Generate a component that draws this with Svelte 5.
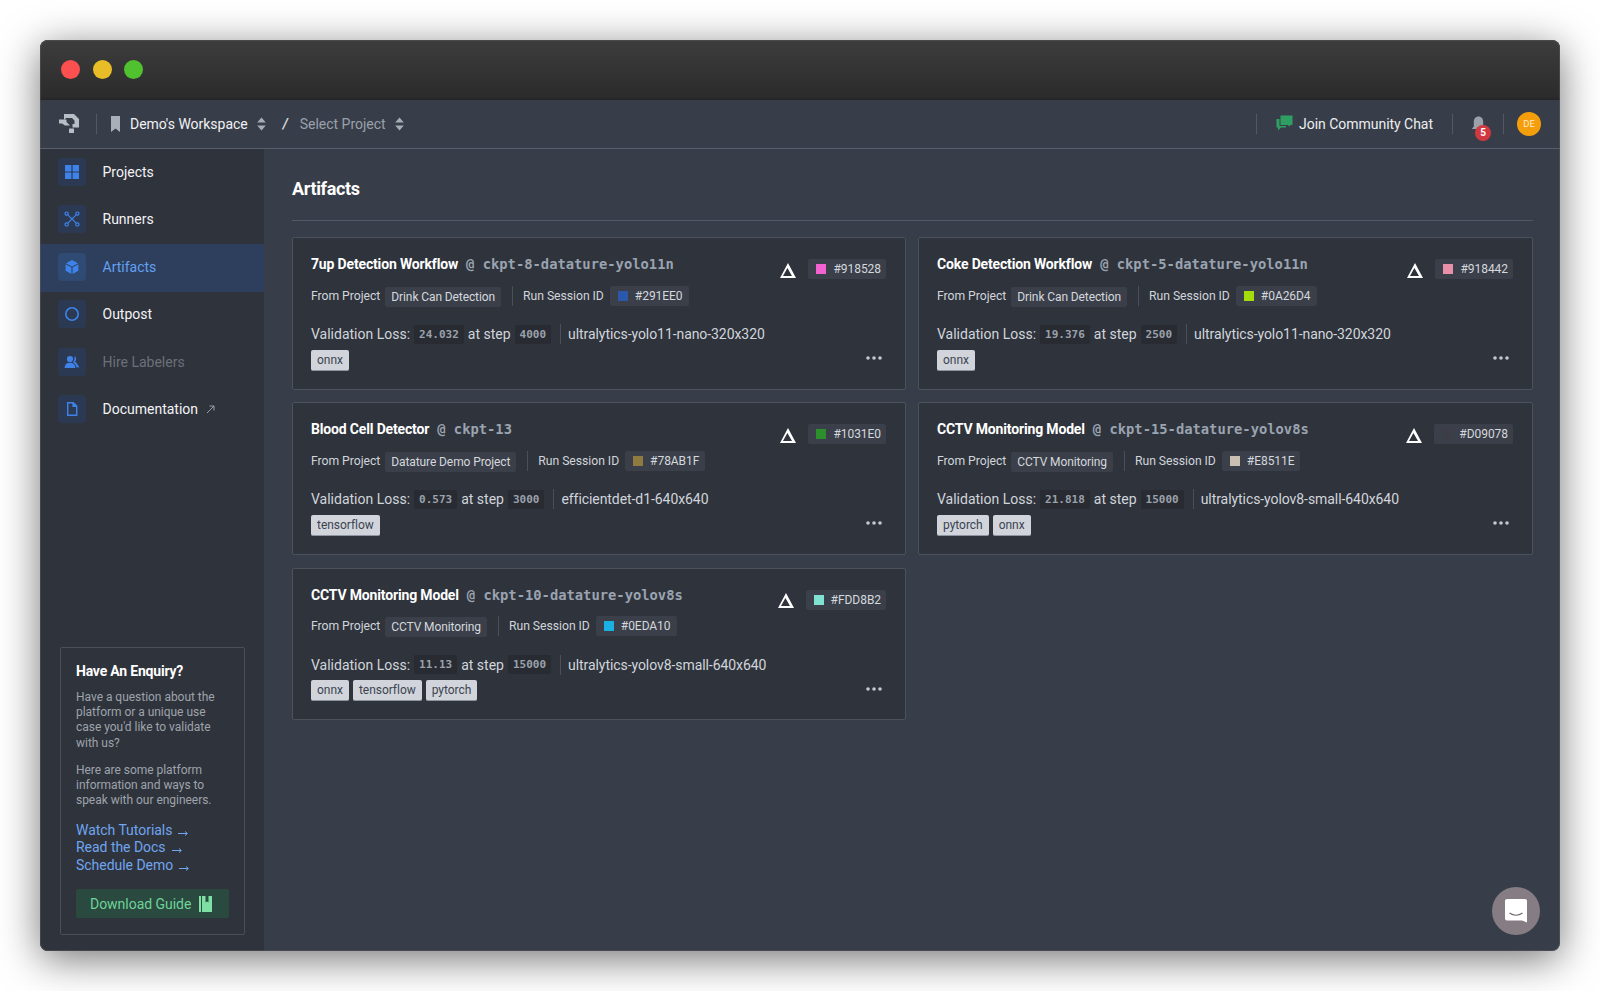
<script>
  const nav = [
    { label: 'Projects', icon: 'grid' },
    { label: 'Runners', icon: 'nodes' },
    { label: 'Artifacts', icon: 'cube', active: true },
    { label: 'Outpost', icon: 'ring' },
    { label: 'Hire Labelers', icon: 'people', muted: true },
    { label: 'Documentation', icon: 'doc', ext: true }
  ];
  const cards = [
    { title: '7up Detection Workflow', ck: 'ckpt-8-datature-yolo11n', hash: '#918528', sw: '#f462d2', project: 'Drink Can Detection', run: '#291EE0', runSw: '#2a58ab', loss: '24.032', step: '4000', model: 'ultralytics-yolo11-nano-320x320', tags: ['onnx'] },
    { title: 'Coke Detection Workflow', ck: 'ckpt-5-datature-yolo11n', hash: '#918442', sw: '#e98fa8', project: 'Drink Can Detection', run: '#0A26D4', runSw: '#a3dc0a', loss: '19.376', step: '2500', model: 'ultralytics-yolo11-nano-320x320', tags: ['onnx'] },
    { title: 'Blood Cell Detector', ck: 'ckpt-13', hash: '#1031E0', sw: '#2c8f2c', project: 'Datature Demo Project', run: '#78AB1F', runSw: '#8f7a40', loss: '0.573', step: '3000', model: 'efficientdet-d1-640x640', tags: ['tensorflow'] },
    { title: 'CCTV Monitoring Model', ck: 'ckpt-15-datature-yolov8s', hash: '#D09078', sw: '#3d3d47', project: 'CCTV Monitoring', run: '#E8511E', runSw: '#c9bfb2', loss: '21.818', step: '15000', model: 'ultralytics-yolov8-small-640x640', tags: ['pytorch', 'onnx'] },
    { title: 'CCTV Monitoring Model', ck: 'ckpt-10-datature-yolov8s', hash: '#FDD8B2', sw: '#80e0d2', project: 'CCTV Monitoring', run: '#0EDA10', runSw: '#1bb0e2', loss: '11.13', step: '15000', model: 'ultralytics-yolov8-small-640x640', tags: ['onnx', 'tensorflow', 'pytorch'] }
  ];
  const links = ['Watch Tutorials', 'Read the Docs', 'Schedule Demo'];
</script>

{#snippet updown()}
  <svg class="updown" width="9" height="14" viewBox="0 0 9 14"><path d="M4.5 0.5 L8.8 5.5 H0.2 Z M4.5 13.5 L0.2 8.5 H8.8 Z" fill="currentColor"/></svg>
{/snippet}

{#snippet navIcon(kind)}
  <svg width="16" height="16" viewBox="0 0 16 16" fill="#3f83ea" stroke="none">
    {#if kind === 'grid'}
      <rect x="1" y="1" width="6.4" height="6.4" rx=".5"/><rect x="8.6" y="1" width="6.4" height="6.4" rx=".5"/><rect x="1" y="8.6" width="6.4" height="6.4" rx=".5"/><rect x="8.6" y="8.6" width="6.4" height="6.4" rx=".5"/>
    {:else if kind === 'nodes'}
      <g fill="none" stroke="#3f83ea" stroke-width="1.2"><circle cx="2.6" cy="2.6" r="1.6"/><circle cx="13.4" cy="2.6" r="1.6"/><circle cx="2.6" cy="13.4" r="1.6"/><circle cx="13.4" cy="13.4" r="1.6"/><path d="M3.8 3.8 L12.2 12.2 M12.2 3.8 L3.8 12.2"/></g>
    {:else if kind === 'cube'}
      <path d="M8 1 L14 4.2 L8 7.4 L2 4.2 Z"/><path d="M1.6 5.2 L7.4 8.4 V15 L1.6 11.8 Z"/><path d="M14.4 5.2 L8.6 8.4 V15 L14.4 11.8 Z"/>
    {:else if kind === 'ring'}
      <circle cx="8" cy="8" r="6.2" fill="none" stroke="#3f83ea" stroke-width="1.6"/>
    {:else if kind === 'people'}
      <circle cx="6" cy="5" r="3.1"/><path d="M0.6 14 C1 10 3 8.8 6 8.8 C9 8.8 11 10 11.4 14 Z"/><path d="M10.4 2.3 C12.4 2.6 13 6.6 10.6 7.8 C12.6 8.4 13 9.8 15.4 13.4 L12.4 13.2 C12 11 11 9.4 9 8.2 C10.6 6.6 10.8 4 10.4 2.3 Z"/>
    {:else}
      <path d="M3 1 H9.6 L13.4 4.8 V15 H3 Z M4.4 2.4 V13.6 H12 V6 H8.4 V2.4 Z" fill-rule="evenodd"/>
    {/if}
  </svg>
{/snippet}

<div class="window">
  <div class="titlebar">
    <span class="dot red"></span><span class="dot yellow"></span><span class="dot green"></span>
  </div>
  <header class="topbar">
    <svg class="logo" width="20" height="19" viewBox="0 0 20 19" fill="#b9bec6">
      <path d="M5 0 H15 L20 5 V13.5 H13.5 V10 H15.5 V6.5 L13 4 H7 L5.5 5.5 H5 Z"/><path d="M0 5.5 H7.5 V8 L11 11.5 H6 L3 9.5 H0 Z"/><rect x="10" y="14.5" width="5" height="4.5" rx=".5"/>
    </svg>
    <span class="vr first"></span>
    <svg class="bookmark" width="9" height="16" viewBox="0 0 9 16"><path d="M0 0 H9 V16 L4.5 12.5 L0 16 Z" fill="#a9afb8"/></svg>
    <span class="crumb">Demo's Workspace</span>
    {@render updown()}
    <span class="slash">/</span>
    <span class="crumb dim">Select Project</span>
    {@render updown()}
    <span class="spacer"></span>
    <span class="vr"></span>
    <svg class="chat" width="17" height="17" viewBox="0 0 17 17" fill="#2f9e63"><path d="M4.5 0.5 H16.5 V10 H14 V11.5 L11.5 10 H4.5 Z"/><path d="M0.5 4 H3.5 V11 H10 V12.5 H5 L2 15.5 V12.5 H0.5 Z"/></svg>
    <span class="join">Join Community Chat</span>
    <span class="vr"></span>
    <span class="bell">
      <svg width="15" height="16" viewBox="0 0 15 16" fill="#9aa1ab"><path d="M7.5 0.5 C10.5 0.5 12.2 2.8 12.2 6 V10.5 L14.2 13 H0.8 L2.8 10.5 V6 C2.8 2.8 4.5 0.5 7.5 0.5 Z"/><path d="M5.5 14 H9.5 C9.5 15 8.6 15.7 7.5 15.7 C6.4 15.7 5.5 15 5.5 14 Z"/></svg>
      <span class="badge">5</span>
    </span>
    <span class="vr"></span>
    <span class="avatar">DE</span>
  </header>
  <div class="body">
    <aside class="sidebar">
      <nav>
        {#each nav as item}
          <div class="nav-row" class:active={item.active} class:muted={item.muted}>
            <span class="nav-icon">{@render navIcon(item.icon)}</span>
            <span class="nav-label">{item.label}</span>
            {#if item.ext}
              <svg class="ext" width="9" height="9" viewBox="0 0 9 9" fill="none" stroke="#9aa1ab" stroke-width="1"><path d="M1 8 L8 1 M3.5 1 H8 V5.5"/></svg>
            {/if}
          </div>
        {/each}
      </nav>
      <div class="enquiry">
        <h3>Have An Enquiry?</h3>
        <p>Have a question about the platform or a unique use case you'd like to validate with us?</p>
        <p>Here are some platform information and ways to speak with our engineers.</p>
        <div class="links">
          {#each links as link}
            <div class="link">{link}<svg class="arrow" width="10" height="6" viewBox="0 0 10 6" fill="none" stroke="#70a5f0" stroke-width="1"><path d="M0 3.5 H9 M7 1.5 L9.4 3.5 L7 5.5"/></svg></div>
          {/each}
        </div>
        <div class="download">
          Download Guide
          <svg width="13" height="16" viewBox="0 0 13 16" fill="#7fe0a6"><path d="M0 0 H2 V16 H0 Z M3 0 H6.5 V6.5 L8 5.5 L9.5 6.5 V0 H13 V16 H3 Z"/></svg>
        </div>
      </div>
    </aside>
    <main class="main">
      <h1>Artifacts</h1>
      <div class="grid">
        {#each cards as c}
          <article class="card">
            <div class="top">
              <div class="title"><strong>{c.title}</strong><span class="ck"><span class="at">@</span> {c.ck}</span></div>
              <div class="top-right">
                <svg class="delta" width="16" height="15" viewBox="0 0 16 15"><path fill-rule="evenodd" d="M8 0 L16 15 H0 Z M7.4 5 L3 13 H12 Z" fill="#fff"/></svg>
                <span class="pill hash"><i style="background:{c.sw}"></i>{c.hash}</span>
              </div>
            </div>
            <div class="meta">
              <span>From Project</span>
              <span class="pill proj">{c.project}</span>
              <span class="sep"></span>
              <span>Run Session ID</span>
              <span class="pill hash run"><i style="background:{c.runSw}"></i>{c.run}</span>
            </div>
            <div class="val">
              <span>Validation Loss:</span>
              <code>{c.loss}</code>
              <span>at step</span>
              <code>{c.step}</code>
              <span class="sep"></span>
              <span class="model">{c.model}</span>
            </div>
            <div class="bottom">
              <div class="tags">{#each c.tags as t}<span class="tag">{t}</span>{/each}</div>
              <svg class="more" width="16" height="4" viewBox="0 0 16 4" fill="#c5c9d0"><circle cx="2" cy="2" r="1.8"/><circle cx="8" cy="2" r="1.8"/><circle cx="14" cy="2" r="1.8"/></svg>
            </div>
          </article>
        {/each}
      </div>
    </main>
  </div>
  <div class="bubble">
    <svg width="24" height="26" viewBox="0 0 24 26"><path d="M3 1 H21 Q23 1 23 3 V24.5 L18 22.5 H3 Q1 22.5 1 20.5 V3 Q1 1 3 1 Z" fill="#fff"/><path d="M5.5 15 Q12 19.5 18.5 15" fill="none" stroke="#6e686c" stroke-width="1.2"/></svg>
  </div>
</div>

<style>
  :global(body) { margin: 0; background: #fff; font-family: Roboto, "Liberation Sans", sans-serif; }
  .window {
    position: relative; width: 1520px; height: 911px; margin: 40px; border-radius: 8px; overflow: hidden;
    background: #383e49; display: flex; flex-direction: column; color: #e5e7eb;
    box-shadow: 0 8px 40px rgba(0,0,0,.55); outline: 1px solid rgba(90,90,90,.5); outline-offset: -1px;
  }
  .titlebar { height: 60px; flex: none; box-sizing: border-box; display: flex; align-items: center; gap: 12.5px; padding: 1px 0 0 21px;
    background: linear-gradient(#3d3d3d, #2b2b2b); border-bottom: 2px solid #24262a; }
  .dot { width: 19px; height: 19px; border-radius: 50%; }
  .red { background: #fb5050; } .yellow { background: #e8bd28; } .green { background: #51c22f; }
  .topbar { height: 49px; flex: none; box-sizing: border-box; border-bottom: 1px solid #58606e; display: flex; align-items: center; padding: 0 19px 1px 19px; font-size: 14px; }
  .logo { margin-right: 17px; }
  .vr { width: 1px; height: 20px; background: #525966; flex: none; }
  .vr.first { margin-right: 14px; }
  .bookmark { margin-right: 10px; }
  .crumb { color: #f0f1f3; letter-spacing: -.02px; }
  .crumb.dim { color: #9aa1ab; }
  .updown { color: #a6acb5; margin-left: 9px; }
  .slash { margin: 0 12px 0 17px; color: #d5d8dc; font-style: italic; font-weight: 700; }
  .spacer { flex: 1; }
  .chat { margin: 0 6px 0 19px; }
  .join { color: #eceef0; margin-right: 19px; letter-spacing: -.03px; }
  .bell { position: relative; width: 15px; height: 16px; margin: 0 17px 0 18px; }
  .bell svg { display: block; }
  .badge { position: absolute; left: 4px; top: 9px; width: 16px; height: 16px; border-radius: 50%; background: #d2383f; color: #fff; font-size: 10px; font-weight: 700; display: flex; align-items: center; justify-content: center; }
  .avatar { width: 24px; height: 24px; margin-left: 13px; border-radius: 50%; background: #f59e0b; color: #fde9c4; font-size: 9.5px; display: flex; align-items: center; justify-content: center; }
  .body { flex: 1; display: flex; min-height: 0; }
  .sidebar { width: 224px; flex: none; background: #2f333c; display: flex; flex-direction: column; justify-content: space-between; padding-bottom: 16px; box-sizing: border-box; }
  .nav-row { height: 47.5px; box-sizing: border-box; display: flex; align-items: center; padding: 0 0 2px 18px; font-size: 14px; color: #f3f4f6; }
  .nav-row.active { background: #2d3f5c; color: #63a0f2; }
  .nav-row.muted { color: #6b7079; }
  .nav-icon { width: 28px; height: 28px; border-radius: 4px; background: #2b3a52; display: flex; align-items: center; justify-content: center; margin-right: 16.5px; }
  .nav-row.active .nav-icon { background: #2f4a73; }
  .ext { margin-left: 8px; }
  .enquiry { margin: 0 19px 0 20px; height: 288px; box-sizing: border-box; padding: 14px 15px; border: 1px solid #4a4f59; border-radius: 2px; }
  .enquiry h3 { margin: 0 0 9.5px; font-size: 14px; line-height: 18px; font-weight: 700; color: #fff; letter-spacing: -.2px; }
  .enquiry p { margin: 0 0 11.5px; font-size: 12px; line-height: 15.4px; color: #9ea3ab; letter-spacing: -.03px; }
  .links { margin-top: 13px; }
  .link { font-size: 14px; height: 17.4px; line-height: 17.4px; color: #70a5f0; letter-spacing: -.03px; }
  .arrow { margin-left: 6px; vertical-align: -1px; }
  .download { margin-top: 15px; height: 29px; display: flex; align-items: center; padding-left: 14px; gap: 8px; background: #2a4a3f; border-radius: 2px; color: #6ed39a; font-size: 14px; letter-spacing: -.03px; }
  .main { flex: 1; padding: 0 27px 0 28px; min-width: 0; }
  h1 { margin: 0; height: 72px; line-height: 79px; box-sizing: border-box; border-bottom: 1px solid #525966; font-size: 18px; font-weight: 700; color: #fff; letter-spacing: -.35px; }
  .grid { margin-top: 16px; display: grid; grid-template-columns: 614px 1fr; gap: 12.7px 12px; grid-auto-rows: 152.6px; }
  .card { box-sizing: border-box; background: #2f333c; border: 1px solid #4c515b; border-radius: 2px; padding: 16px 19px 0 18px; display: flex; flex-direction: column; }
  .top { display: flex; justify-content: space-between; align-items: flex-start; height: 31.5px; }
  .title { display: flex; align-items: baseline; height: 20px; line-height: 20px; }
  .title strong { font-size: 14px; font-weight: 700; color: #fff; letter-spacing: -.16px; }
  .ck { margin-left: 8px; font-family: "DejaVu Sans Mono", monospace; font-size: 13.8px; font-weight: 700; color: #9aa3b0; white-space: pre; }
  .top-right { display: flex; align-items: center; gap: 12px; margin-top: 5px; }
  .delta { margin-top: 2px; }
  .pill { background: #3a3f4a; border-radius: 2px; height: 20px; display: inline-flex; align-items: center; padding: 0 6px; font-size: 12px; color: #d5d8dc; letter-spacing: -.1px; }
  .hash { padding: 0 5px 0 8px; letter-spacing: -.05px; }
  .hash i { width: 10px; height: 10px; margin-right: 7px; display: block; }
  .meta { display: flex; align-items: center; height: 20px; font-size: 12.2px; letter-spacing: -.03px; color: #d1d5db; }
  .proj { margin-left: 5px; position: relative; top: 1px; }
  .sep { width: 1px; height: 20px; background: #4a4f59; margin: 0 10px 0 11px; flex: none; }
  .run { margin-left: 6px; padding-right: 6px; }
  .val { display: flex; align-items: center; height: 20px; margin-top: 18.5px; font-size: 14px; color: #d1d5db; white-space: nowrap; }
  .val .sep { margin: 0 7px 0 5px; }
  .model { letter-spacing: -.07px; }
  code { font-family: "DejaVu Sans Mono", monospace; font-size: 11px; font-weight: 700; color: #9aa1ab; background: #282b32; border-radius: 2px; height: 19px; display: inline-flex; align-items: center; padding: 0 5px; margin: 0 4px; }
  .bottom { display: flex; justify-content: space-between; align-items: center; margin-top: 5.5px; padding-right: 4px; }
  .more { margin-bottom: 4px; }
  .tags { display: flex; gap: 4px; }
  .tag { height: 21px; box-sizing: border-box; background: #d1d5db; border-bottom: 1px solid #8f95a0; border-radius: 2px; padding: 0 6px; line-height: 20px; font-size: 12px; color: #3b4350; letter-spacing: -.03px; }
  .bubble { position: absolute; right: 20px; bottom: 16px; width: 48px; height: 48px; border-radius: 50%; background: #857d83; display: flex; align-items: center; justify-content: center; }
</style>
